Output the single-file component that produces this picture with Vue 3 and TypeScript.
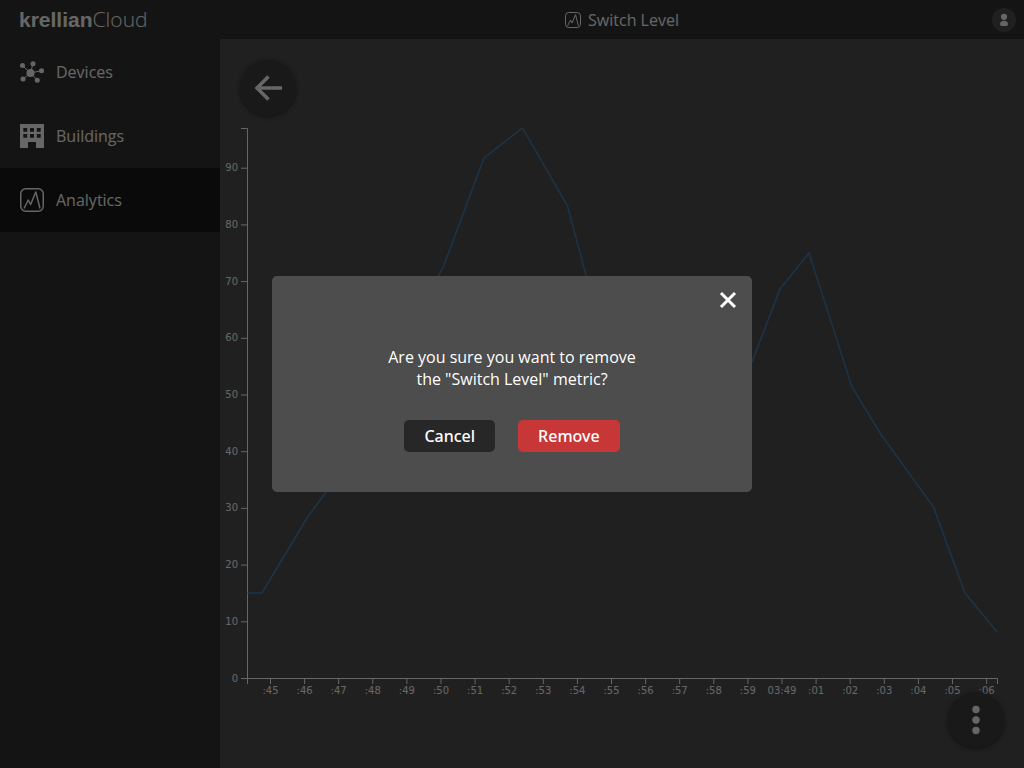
<script setup lang="ts">
interface Tick {
  pos: number
  label: string
}

const plotHeight = 550
const maxValue = 97

const yTicks: Tick[] = Array.from({ length: 10 }, (_, i) => ({
  pos: plotHeight + 0.5 - (i * 10 * plotHeight) / maxValue,
  label: String(i * 10),
}))

const seconds = [':45', ':46', ':47', ':48', ':49', ':50', ':51', ':52', ':53', ':54', ':55',
  ':56', ':57', ':58', ':59', '03:49', ':01', ':02', ':03', ':04', ':05', ':06']
const xTicks: Tick[] = seconds.map((label, i) => ({
  pos: 50.5 + i * 34.1,
  label,
}))

const line = 'M27.5 465H42L87 390L109 360L181 225L224 137L264 30L302.5 0L347.5 78L366 147'
  + 'L440 300L500 310L532 234L560 161L589 125L632 259L660 305L713.5 379L745 465L777 504'
</script>

<template>
  <div class="app">
    <header class="topbar">
      <a class="logo" href="#"><b>krellian</b>Cloud</a>
      <h1 class="title">
        <svg class="title-icon" viewBox="0 0 24 24" aria-hidden="true">
          <rect x="0.75" y="0.75" width="22.5" height="22.5" rx="5" />
          <path d="M4 20.5L8.3 12L10.6 16.5L15.8 4L20 20.5" />
        </svg>
        Switch Level
      </h1>
      <button class="user" type="button" aria-label="Account">
        <svg viewBox="0 0 24 24" aria-hidden="true">
          <circle cx="12" cy="8.8" r="3.1" />
          <path d="M8 16C8 11.5 16 11.5 16 16Q16 18 14.5 18H9.5Q8 18 8 16Z" />
        </svg>
      </button>
    </header>
    <div class="body">
      <nav class="sidebar">
        <a href="#" class="item">
          <svg class="solid" viewBox="0 0 24 24" aria-hidden="true">
            <path class="spokes" d="M10.5 13L2.5 5.6M10.5 13L13 3.5M10.5 13L21.5 10.7M10.5 13L3 19M10.5 13L17.3 20.2" />
            <circle cx="10.5" cy="13" r="4" />
            <circle cx="2.5" cy="5.6" r="2.5" />
            <circle cx="13" cy="3.7" r="2.5" />
            <circle cx="21.5" cy="10.7" r="2.5" />
            <circle cx="3" cy="19" r="2.5" />
            <circle cx="17.3" cy="20.2" r="2.5" />
          </svg>
          Devices
        </a>
        <a href="#" class="item">
          <svg class="solid" viewBox="0 0 24 24" aria-hidden="true">
            <path fill-rule="evenodd" d="M0 0H24V24H16V18H8V24H0ZM3.3 4V7.7H7.2V4ZM10 4V7.7H14V4ZM16.8 4V7.7H20.7V4ZM3.3 10V13.7H7.2V10ZM10 10V13.7H14V10ZM16.8 10V13.7H20.7V10Z" />
          </svg>
          Buildings
        </a>
        <a href="#" class="item active" aria-current="page">
          <svg class="outline" viewBox="0 0 24 24" aria-hidden="true">
            <rect x="0.75" y="0.75" width="22.5" height="22.5" rx="5" />
            <path d="M4 20.5L8.3 12L10.6 16.5L15.8 4L20 20.5" />
          </svg>
          Analytics
        </a>
      </nav>
      <main class="content">
        <button class="round" type="button" aria-label="Back">
          <svg viewBox="0 0 56 56" aria-hidden="true">
            <path class="arrow" d="M42 28H17M28.5 16.5L17 28L28.5 39.5" />
          </svg>
        </button>
        <svg class="chart" viewBox="0 0 804 580" role="img" aria-label="Switch Level over time">
          <path class="axis" d="M21 0.5H27.5V550.5H21" />
          <path class="axis" d="M27.5 556V550.5H777.5V556" />
          <g v-for="t in yTicks" :key="'y' + t.label">
            <path class="axis" :d="`M21 ${t.pos}H27`" />
            <text class="label" x="18" :y="t.pos + 3" text-anchor="end">{{ t.label }}</text>
          </g>
          <g v-for="t in xTicks" :key="'x' + t.label">
            <path class="axis" :d="`M${t.pos} 551V556`" />
            <text class="label" :x="t.pos" y="566" text-anchor="middle">{{ t.label }}</text>
          </g>
          <path class="series" :d="line" />
        </svg>
        <button class="round menu" type="button" aria-label="More options">
          <svg viewBox="0 0 56 56" aria-hidden="true">
            <circle cx="28" cy="17.5" r="3.7" />
            <circle cx="28" cy="28" r="3.7" />
            <circle cx="28" cy="38.5" r="3.7" />
          </svg>
        </button>
      </main>
    </div>
    <div class="scrim">
      <section class="dialog" role="dialog" aria-modal="true" aria-labelledby="question">
        <button class="close" type="button" aria-label="Close">
          <svg viewBox="0 0 24 24" aria-hidden="true"><path d="M5 5L19 19M19 5L5 19" /></svg>
        </button>
        <p id="question">Are you sure you want to remove<br>the "Switch Level" metric?</p>
        <div class="actions">
          <button class="action" type="button">Cancel</button>
          <button class="action danger" type="button">Remove</button>
        </div>
      </section>
    </div>
  </div>
</template>

<style>
body {
  margin: 0;
  background: #505050;
}
</style>

<style scoped>
.app {
  min-height: 100vh;
  display: flex;
  flex-direction: column;
  color: #fff;
  font: 16px/22px "Open Sans", sans-serif;
}
.app * {
  box-sizing: border-box;
}
button {
  border: 0;
  padding: 0;
  color: inherit;
}
svg {
  display: block;
}
.topbar {
  display: grid;
  grid-template-columns: 220px 1fr 32px;
  align-items: center;
  height: 39px;
  background: #343434;
}
.logo {
  padding-left: 19px;
  color: #fff;
  text-decoration: none;
  font-size: 21px;
  font-weight: 300;
}
.logo b {
  font-family: "Liberation Sans", sans-serif;
  font-weight: 700;
}
.title {
  display: flex;
  align-items: center;
  justify-content: center;
  gap: 7px;
  margin: 0;
  padding-left: 32px;
  font-size: 16px;
  font-weight: 400;
}
.title-icon {
  width: 16px;
  height: 16px;
}
.title-icon,
.outline {
  fill: none;
  stroke: #fff;
  stroke-width: 1.5;
  stroke-linejoin: round;
}
.user {
  width: 24px;
  height: 24px;
  border-radius: 50%;
  background: #505050;
}
.user svg {
  fill: #fff;
}
.body {
  flex: 1;
  display: flex;
}
.sidebar {
  flex: none;
  width: 220px;
  padding-top: 1px;
  background: #343434;
}
.item {
  display: flex;
  align-items: center;
  gap: 12px;
  height: 64px;
  padding: 0 20px;
  color: #fff;
  text-decoration: none;
}
.item svg {
  width: 24px;
  height: 24px;
}
.active {
  background: #191919;
}
.solid {
  fill: #fff;
}
.spokes {
  stroke: #fff;
}
.content {
  position: relative;
  flex: 1;
  min-width: 0;
  padding-top: 21px;
  background: #505050;
}
.round {
  display: block;
  width: 56px;
  height: 56px;
  margin-left: 20px;
  border-radius: 50%;
  background: #404040;
  box-shadow: 0 1px 4px rgba(0, 0, 0, 0.5);
  fill: #fff;
}
.arrow {
  fill: none;
  stroke: #fff;
  stroke-width: 3.5;
}
.chart {
  width: 100%;
  margin-top: 12px;
}
.axis {
  fill: none;
  stroke: #fff;
}
.label {
  fill: #fff;
  font: 10px "DejaVu Sans", sans-serif;
}
.series {
  fill: none;
  stroke: #4682b4;
  stroke-width: 1.5;
}
.menu {
  position: absolute;
  right: 20px;
  bottom: 20px;
}
.scrim {
  position: fixed;
  inset: 0;
  display: flex;
  align-items: center;
  justify-content: center;
  background: rgba(0, 0, 0, 0.6);
}
.dialog {
  width: 480px;
  max-width: 90vw;
  padding: 12px 12px 40px;
  border-radius: 5px;
  background: #4d4d4d;
  text-align: center;
}
.close {
  display: block;
  width: 24px;
  height: 24px;
  margin-left: auto;
  background: none;
}
.close path {
  stroke: #fff;
  stroke-width: 3;
}
.dialog p {
  margin: 34px 0 30px;
}
.actions {
  display: flex;
  justify-content: center;
  gap: 23px;
}
.action {
  height: 32px;
  padding: 0 20px;
  border-radius: 5px;
  background: #272727;
  font: 500 16px "Noto Sans", sans-serif;
}
.danger {
  background: #c83737;
}
</style>
